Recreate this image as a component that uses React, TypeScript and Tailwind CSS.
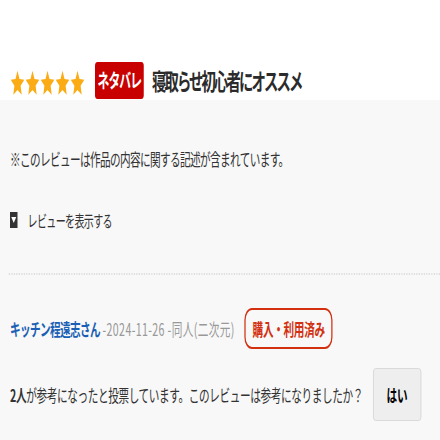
import React from 'react';

const Star = () => (
    <svg width="24" height="28" viewBox="0 0 24 24" preserveAspectRatio="none" className="block">
        <path d="M12 1.5l3.2 7.1 7.6.7-5.8 5.1 1.7 7.6L12 18l-6.7 4 1.7-7.6-5.8-5.1 7.6-.7z" fill="#fbab13" />
    </svg>
);

const App = () => {
    return (
        <div className="h-[440px] w-[440px] overflow-hidden bg-[#f8f8f8]">
            <div
                className="w-[704px] origin-top-left scale-x-[0.625] text-[#333]"
                style={{ fontFamily: '"Noto Sans CJK JP", "Noto Sans", sans-serif' }}
            >
                <div className="h-[100px] bg-white pl-4 pt-[62px] flex items-start">
                    <div className="flex mt-[7px]">
                        <Star />
                        <Star />
                        <Star />
                        <Star />
                        <Star />
                    </div>
                    <div className="ml-4 h-[37px] w-[78px] rounded bg-[#c80000] text-white text-[19px] tracking-[-1.5px] font-bold flex items-center justify-center">
                        ネタバレ
                    </div>
                    <div className="ml-[13px] h-[37px] flex items-center text-[23px] font-bold tracking-[-3px] text-[#2b2b2b]">
                        寝取らせ初心者にオススメ
                    </div>
                </div>

                <div className="pl-4">
                    <p className="mt-[49px] text-[17px] tracking-[-1px] leading-[20px]">※このレビューは作品の内容に関する記述が含まれています。</p>
                    <div className="mt-[41px] flex items-center h-[20px]">
                        <span className="w-[12px] h-[16px] bg-[#333] flex items-center justify-center">
                            <span className="border-x-[4px] border-t-[6px] border-x-transparent border-t-white"></span>
                        </span>
                        <span className="ml-4 text-[16px] tracking-[-1px] leading-[20px]">レビューを表示する</span>
                    </div>
                </div>

                <div className="mt-[43px] ml-[14px] border-t-2 border-dotted border-[#dedede]"></div>

                <div className="pl-4">
                    <div className="mt-[33px] flex items-center">
                        <span className="text-[17px] tracking-[-1px] font-bold text-[#1a5fb4]">キッチン程遠志さん</span>
                        <span className="ml-1 text-[17px] tracking-[0.6px] text-[#999]">-2024-11-26 -同人(二次元)</span>
                        <span className="ml-4 h-[41px] w-[141px] rounded-xl border-2 border-[#d2300f] text-[#d2300f] text-[17px] tracking-[-0.5px] font-bold flex items-center justify-center">
                            購入・利用済み
                        </span>
                    </div>
                    <div className="mt-[19px] flex items-center">
                        <span className="text-[17px] tracking-[-0.6px]">
                            <b>2人</b>が参考になったと投票しています。このレビューは参考になりましたか？
                        </span>
                        <span className="ml-4 h-[53px] w-[77px] rounded border border-[#d4d4d4] bg-[#eeeeee] text-[17px] font-bold text-black flex items-center justify-center">
                            はい
                        </span>
                    </div>
                </div>
            </div>
        </div>
    );
};

export default App;
